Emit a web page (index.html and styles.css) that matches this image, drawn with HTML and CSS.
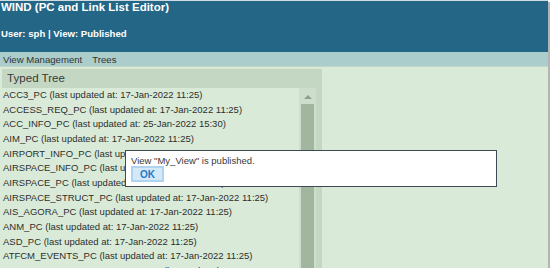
FILE: index.html
```html
<!DOCTYPE html>
<html>
    <head>
        <meta charset="UTF-8">
        <title>WIND (PC and Link List Editor)</title>
        <link rel="stylesheet" href="styles.css">
    </head>
    <body>
        <div class="app">
            <div class="header">
                <div class="title">WIND (PC and Link List Editor)</div>
                <div class="user">User: sph | View: Published</div>
            </div>

            <div class="menu">
                <span class="menu-item">View Management</span>
                <span class="menu-item">Trees</span>
            </div>

            <div class="content">
                <div class="panel">
                    <div class="panel-title">Typed Tree</div>
                    <div class="panel-body">
                        <ul class="tree">
                            <li>ACC3_PC (last updated at: 17-Jan-2022 11:25)</li>
                            <li>ACCESS_REQ_PC (last updated at: 17-Jan-2022 11:25)</li>
                            <li>ACC_INFO_PC (last updated at: 25-Jan-2022 15:30)</li>
                            <li>AIM_PC (last updated at: 17-Jan-2022 11:25)</li>
                            <li>AIRPORT_INFO_PC (last updated at: 17-Jan-2022 11:25)</li>
                            <li>AIRSPACE_INFO_PC (last updated at: 17-Jan-2022 11:25)</li>
                            <li>AIRSPACE_PC (last updated at: 17-Jan-2022 11:25)</li>
                            <li>AIRSPACE_STRUCT_PC (last updated at: 17-Jan-2022 11:25)</li>
                            <li>AIS_AGORA_PC (last updated at: 17-Jan-2022 11:25)</li>
                            <li>ANM_PC (last updated at: 17-Jan-2022 11:25)</li>
                            <li>ASD_PC (last updated at: 17-Jan-2022 11:25)</li>
                            <li>ATFCM_EVENTS_PC (last updated at: 17-Jan-2022 11:25)</li>
                            <li>ATM_AI_CHANGES_PLANNING_PC (last updated at: 17-Jan-2022 11:25)</li>
                            <li>ATS_ROUTES_PC (last updated at: 17-Jan-2022 11:25)</li>
                        </ul>
                        <div class="scrollbar">
                            <div class="scroll-arrow"></div>
                            <div class="scroll-thumb"></div>
                        </div>
                    </div>
                </div>
            </div>

            <div class="dialog">
                <div class="dialog-text">View "My_View" is published.</div>
                <button class="dialog-button">OK</button>
            </div>
        </div>
    </body>
</html>
```

FILE: styles.css
```css
*
{
    box-sizing: border-box;
}

body
{
    margin: 0;
    background: #ffffff;
    font-family: "Liberation Sans", Arial, sans-serif;
}

.app
{
    position: relative;
    display: flex;
    flex-direction: column;
    width: 548px;
    height: 268px;
    box-shadow: 2px 2px 0 #b4b4b4;
}

.header
{
    height: 52px;
    border-top: 1px solid #cfdde3;
    background: #236686;
    color: #ffffff;
    padding-left: 1px;
}

.title
{
    font-size: 11.5px;
    font-weight: bold;
    line-height: 13px;
}

.user
{
    margin-top: 14px;
    font-size: 9.6px;
    font-weight: bold;
    line-height: 11px;
}

.menu
{
    display: flex;
    gap: 10px;
    height: 15px;
    padding: 2px 0 0 3px;
    background: #abcdcc;
    border-bottom: 1px solid #c3d6c5;
    font-size: 9.6px;
    line-height: 11px;
    color: #333333;
}

.content
{
    flex: 1;
    min-height: 0;
    padding: 2px 0 0 2px;
    background: #d9ebd8;
}

.panel
{
    display: flex;
    flex-direction: column;
    width: 320px;
    height: 100%;
    padding-right: 6px;
    background: #c4d7c3;
}

.panel-title
{
    height: 19px;
    padding: 2px 0 0 5px;
    font-size: 11.6px;
    line-height: 13px;
    color: #3a3a3a;
}

.panel-body
{
    flex: 1;
    min-height: 0;
    display: flex;
    overflow: hidden;
}

.tree
{
    flex: 1;
    margin: 0;
    padding: 0 0 0 1px;
    list-style: none;
    background: #d9ebd8;
    overflow: hidden;
}

.tree li
{
    padding: 1.9px 0;
    font-size: 9.5px;
    line-height: 10.9px;
    color: #2e2e2e;
    white-space: nowrap;
}

.scrollbar
{
    display: flex;
    flex-direction: column;
    align-items: center;
    width: 17px;
    background: #cddfcc;
}

.scroll-arrow
{
    width: 0;
    height: 0;
    margin-top: 7px;
    border-left: 4px solid transparent;
    border-right: 4px solid transparent;
    border-bottom: 4px solid #8ea28d;
}

.scroll-thumb
{
    flex: 1;
    width: 13px;
    margin-top: 5px;
    background: #a1b59f;
}

.dialog
{
    position: absolute;
    left: 125px;
    top: 150px;
    width: 372px;
    height: 37px;
    padding: 4px 0 0 5px;
    background: #ffffff;
    border: 1px solid #3d4b55;
}

.dialog-text
{
    font-size: 9.5px;
    line-height: 11px;
    color: #3a3a3a;
}

.dialog-button
{
    display: block;
    width: 33px;
    height: 16px;
    margin-top: 0;
    padding: 0;
    background: #d3e8f8;
    border: 2px solid #aed4f0;
    font-family: "Liberation Sans", Arial, sans-serif;
    font-size: 10px;
    font-weight: bold;
    color: #1f7bc4;
}
```
